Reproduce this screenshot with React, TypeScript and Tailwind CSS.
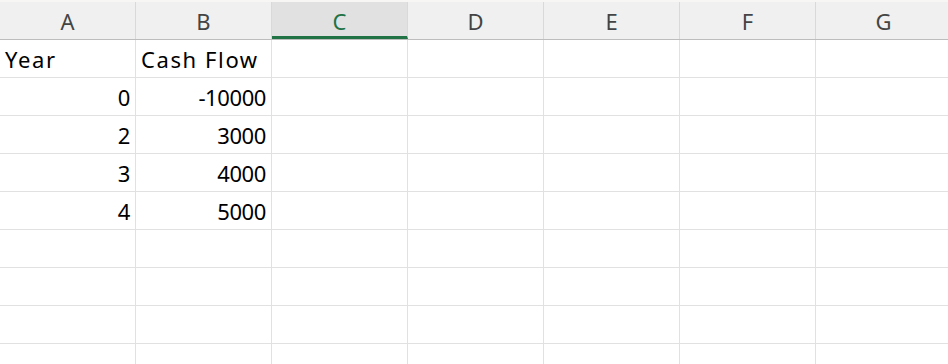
const columns = ["A", "B", "C", "D", "E", "F", "G"];

const rows: (string | number | null)[][] = [
  ["Year", "Cash Flow"],
  [0, -10000],
  [2, 3000],
  [3, 4000],
  [4, 5000],
  [],
  [],
  [],
  [],
];

export default function App() {
  return (
    <div className="w-[948px] h-[364px] overflow-hidden bg-white font-['Noto_Sans',sans-serif]">
      {/* column headers */}
      <div className="flex h-[40px] border-t-2 border-t-[#f7f6f5] border-b border-b-[#bdbdbd] bg-[#f0f0f0]">
        {columns.map((col) => {
          const selected = col === "C";
          return (
            <div
              key={col}
              className={`shrink-0 w-[136px] flex items-center justify-center border-r border-r-[#d9d9d9] text-[22px] leading-none ${
                selected
                  ? "bg-[#e1e1e1] text-[#217346] border-b-[3px] border-b-[#217346] pt-[3px]"
                  : "text-[#444444]"
              }`}
            >
              {col}
            </div>
          );
        })}
      </div>

      {/* grid rows */}
      {rows.map((row, r) => (
        <div key={r} className="flex h-[38px]">
          {columns.map((col, c) => {
            const value = row[c];
            const numeric = typeof value === "number";
            return (
              <div
                key={col}
                className={`shrink-0 w-[136px] h-full flex items-center border-r border-b border-[#e1e1e1] px-[5px] text-[22px] leading-none text-black ${
                  numeric ? "justify-end tracking-[-0.4px]" : "justify-start tracking-[1.6px]"
                }`}
              >
                {value ?? ""}
              </div>
            );
          })}
        </div>
      ))}
    </div>
  );
}
